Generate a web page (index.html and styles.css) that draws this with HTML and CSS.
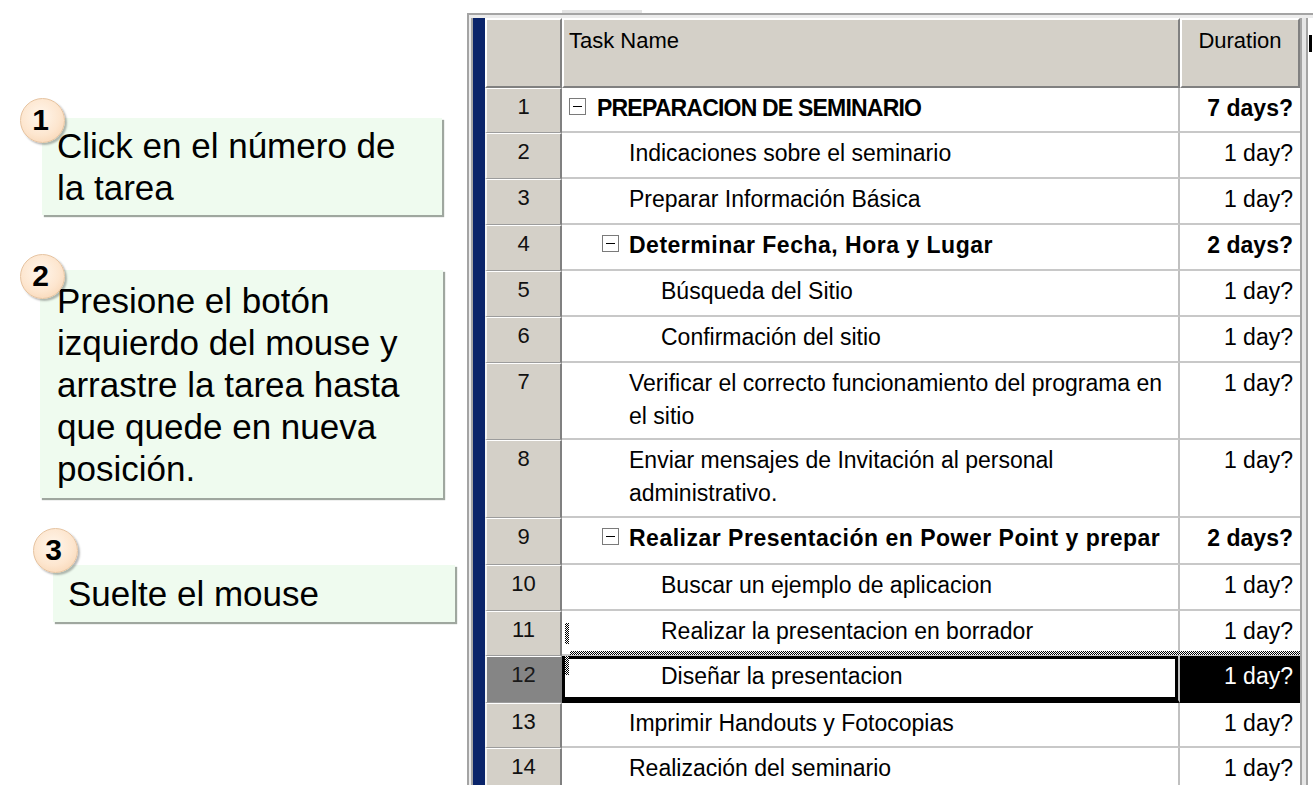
FILE: index.html
```html
<!DOCTYPE html>
<html lang="es">
<head>
<meta charset="utf-8">
<title>Mover tarea</title>
<link rel="stylesheet" href="styles.css">
</head>
<body>
<div class="page">
  <div class="steps">
    <div class="callout c1">
      <div class="box">Click en el número de<br>la tarea</div>
      <div class="badge">1</div>
    </div>
    <div class="callout c2">
      <div class="box">Presione el botón<br>izquierdo del mouse y<br>arrastre la tarea hasta<br>que quede en nueva<br>posición.</div>
      <div class="badge">2</div>
    </div>
    <div class="callout c3">
      <div class="box">Suelte el mouse</div>
      <div class="badge">3</div>
    </div>
  </div>

  <div class="project">
    <div class="tab"></div>
    <div class="frame">
      <div class="frame-inner">
        <div class="bluebar"></div>
        <div class="sheet">
          <div class="row head">
            <div class="corner"></div>
            <div class="hcell task-h">Task Name</div>
            <div class="hcell dur-h">Duration</div>
          </div>
          <div class="row r45 summary">
            <div class="num">1</div>
            <div class="task l0 tight"><span class="toggle"></span>PREPARACION DE SEMINARIO</div>
            <div class="dur">7 days?</div>
          </div>
          <div class="row">
            <div class="num">2</div>
            <div class="task l1">Indicaciones sobre el seminario</div>
            <div class="dur">1 day?</div>
          </div>
          <div class="row">
            <div class="num">3</div>
            <div class="task l1">Preparar Información Básica</div>
            <div class="dur">1 day?</div>
          </div>
          <div class="row summary">
            <div class="num">4</div>
            <div class="task l1s wide"><span class="toggle"></span>Determinar Fecha, Hora y Lugar</div>
            <div class="dur">2 days?</div>
          </div>
          <div class="row">
            <div class="num">5</div>
            <div class="task l2">Búsqueda del Sitio</div>
            <div class="dur">1 day?</div>
          </div>
          <div class="row">
            <div class="num">6</div>
            <div class="task l2">Confirmación del sitio</div>
            <div class="dur">1 day?</div>
          </div>
          <div class="row r77">
            <div class="num">7</div>
            <div class="task l1">Verificar el correcto funcionamiento del programa en<br>el sitio</div>
            <div class="dur">1 day?</div>
          </div>
          <div class="row r78">
            <div class="num">8</div>
            <div class="task l1">Enviar mensajes de Invitación al personal<br>administrativo.</div>
            <div class="dur">1 day?</div>
          </div>
          <div class="row r47 summary">
            <div class="num">9</div>
            <div class="task l1s wide"><span class="toggle"></span>Realizar Presentación en Power Point y prepar</div>
            <div class="dur">2 days?</div>
          </div>
          <div class="row">
            <div class="num">10</div>
            <div class="task l2">Buscar un ejemplo de aplicacion</div>
            <div class="dur">1 day?</div>
          </div>
          <div class="row r45 drop">
            <div class="num">11</div>
            <div class="task l2">Realizar la presentacion en borrador</div>
            <div class="dur">1 day?</div>
            <span class="drag-v dv1"></span>
            <span class="drag-h"></span>
          </div>
          <div class="row r47 sel">
            <div class="num">12</div>
            <div class="task l2">Diseñar la presentacion</div>
            <div class="dur">1 day?</div>
            <span class="drag-v dv2"></span>
          </div>
          <div class="row r45">
            <div class="num">13</div>
            <div class="task l1">Imprimir Handouts y Fotocopias</div>
            <div class="dur">1 day?</div>
          </div>
          <div class="row">
            <div class="num">14</div>
            <div class="task l1">Realización del seminario</div>
            <div class="dur">1 day?</div>
          </div>
        </div>
        <div class="splitter"></div>
        <div class="rest">
          <div class="rest-head"><span class="stub"></span></div>
        </div>
      </div>
    </div>
  </div>
</div>
</body>
</html>
```

FILE: styles.css
```css
html, body {
  margin: 0;
  padding: 0;
  background: #ffffff;
}

.page {
  display: flex;
  width: 1313px;
  height: 796px;
  overflow: hidden;
  font-family: "Liberation Sans", Arial, sans-serif;
  color: #000;
}

/* ---------- left instructions ---------- */
.steps {
  width: 467px;
  flex: none;
  display: flex;
  flex-direction: column;
}

.callout {
  position: relative;
}

.callout .box {
  background: #effbef;
  box-shadow: 2px 2px 1px #9fa79f;
  font-size: 35px;
  line-height: 42px;
  white-space: nowrap;
  box-sizing: border-box;
}

.c1 {
  margin-top: 118px;
  margin-left: 42px;
  width: 400px;
}
.c1 .box {
  padding: 7px 0 6px 15px;
}

.c2 {
  margin-top: 55px;
  margin-left: 40px;
  width: 403px;
}
.c2 .box {
  padding: 10px 0 8px 17px;
}

.c3 {
  margin-top: 67px;
  margin-left: 53px;
  width: 402px;
}
.c3 .box {
  padding: 8px 0 7px 15px;
}

.badge {
  position: absolute;
  width: 45px;
  height: 45px;
  border-radius: 50%;
  box-sizing: border-box;
  border: 1px solid #e6c3a0;
  background: radial-gradient(circle at 45% 40%, #fff6ec 0%, #fde6cf 55%, #f6cfaa 100%);
  box-shadow: 2px 2px 2px rgba(0, 0, 0, 0.28);
  display: flex;
  align-items: center;
  justify-content: center;
  font-weight: bold;
  font-size: 30px;
  line-height: 1;
  padding-right: 4px;
  padding-bottom: 2px;
}
.c1 .badge { left: -22px; top: -20px; }
.c2 .badge { left: -20px; top: -16px; }
.c3 .badge { left: -20px; top: -37px; }

/* ---------- MS Project sheet ---------- */
.project {
  flex: none;
  width: 846px;
  padding-top: 10px;
}

.tab {
  margin-left: 95px;
  width: 80px;
  height: 3px;
  background: #e4e4e4;
}

.frame {
  width: 846px;
  height: 772px;
  box-sizing: border-box;
  border-top: 2px solid #a4a4a4;
  border-left: 2px solid #a4a4a4;
  background: #ececec;
  padding: 3px 0 0 2px;
  overflow: hidden;
}

.frame-inner {
  display: flex;
  height: 100%;
  border-left: 2px solid #a4a4a4;
  background: #fff;
}

.bluebar {
  width: 12px;
  flex: none;
  background: #0a246a;
}

.sheet {
  width: 815px;
  flex: none;
  display: flex;
  flex-direction: column;
  font-size: 23px;
}

.row {
  display: grid;
  grid-template-columns: 77px 618px 120px;
  height: 46px;
  flex: none;
  position: relative;
}
.row.r45 { height: 45px; }
.row.r47 { height: 47px; }
.row.r77 { height: 77px; }
.row.r78 { height: 78px; }

.row.head {
  height: 70px;
}

.corner,
.num,
.hcell {
  background: #d4d0c8;
  box-sizing: border-box;
}

.corner,
.hcell {
  border-top: 2px solid #ffffff;
  border-left: 2px solid #ffffff;
  border-right: 2px solid #808080;
  border-bottom: 2px solid #808080;
}

.hcell {
  padding: 4px 5px 0 5px;
  line-height: 33px;
  white-space: nowrap;
  font-size: 22px;
}
.dur-h {
  text-align: center;
  padding-left: 0;
  padding-right: 0;
}

.num {
  border-top: 1px solid #ffffff;
  border-left: 2px solid #f4f4f4;
  border-right: 2px solid #808080;
  border-bottom: 1px solid #9c9c9c;
  text-align: center;
  font-size: 22px;
  line-height: 33px;
  padding-top: 1px;
  color: #111;
}

.task,
.dur {
  box-sizing: border-box;
  background: #fff;
  border-bottom: 2px solid #c8c8c8;
  line-height: 33px;
  padding-top: 4px;
  white-space: nowrap;
  overflow: hidden;
}

.task {
  border-right: 2px solid #c0c0c0;
}
.task.l0 { padding-left: 7px; }
.task.l1 { padding-left: 67px; }
.task.l1s { padding-left: 40px; }
.task.l2 { padding-left: 99px; }

.dur {
  text-align: right;
  padding-right: 7px;
}

.summary .task,
.summary .dur {
  font-weight: bold;
}
.task.tight {
  letter-spacing: -0.8px;
}
.task.wide {
  letter-spacing: 0.5px;
}

.toggle {
  display: inline-block;
  width: 17px;
  height: 17px;
  box-sizing: border-box;
  border: 1px solid #7a7a7a;
  background: #fff;
  margin-right: 11px;
  vertical-align: 1px;
  position: relative;
}
.toggle::after {
  content: "";
  position: absolute;
  left: 3px;
  right: 3px;
  top: 7px;
  height: 1px;
  background: #000;
}
.task.wide .toggle {
  margin-right: 10px;
}

/* selected / dragged row */
.row.sel .num {
  background: #858585;
  color: #1a1a1a;
}
.row.sel .task {
  box-shadow: inset 0 0 0 3px #000;
  border-bottom: 3px solid #000;
}
.row.sel .dur {
  background: #000;
  color: #fff;
  border-bottom: 3px solid #000;
}

.drag-h {
  position: absolute;
  left: 85px;
  right: 0;
  bottom: 1px;
  height: 4px;
  background: repeating-conic-gradient(#000 0% 25%, #fff 0% 50%) 0 0 / 2px 2px;
}
.drag-v {
  position: absolute;
  left: 80px;
  width: 4px;
  background: repeating-conic-gradient(#000 0% 25%, #fff 0% 50%) 0 0 / 2px 2px;
}
.dv1 { top: 12px; height: 21px; }
.dv2 { top: 0; height: 19px; }

.splitter {
  width: 4px;
  flex: none;
  border-left: 2px solid #a4a4a4;
  border-right: 2px solid #a4a4a4;
  background: #e6e6e6;
}

.rest {
  flex: 1;
  background: #fff;
  overflow: hidden;
}
.rest-head {
  height: 70px;
  box-sizing: border-box;
  padding: 17px 0 0 1px;
}
.stub {
  display: block;
  width: 3px;
  height: 17px;
  background: #000;
  box-shadow: 3px 7px 0 -1px #000;
}
```
